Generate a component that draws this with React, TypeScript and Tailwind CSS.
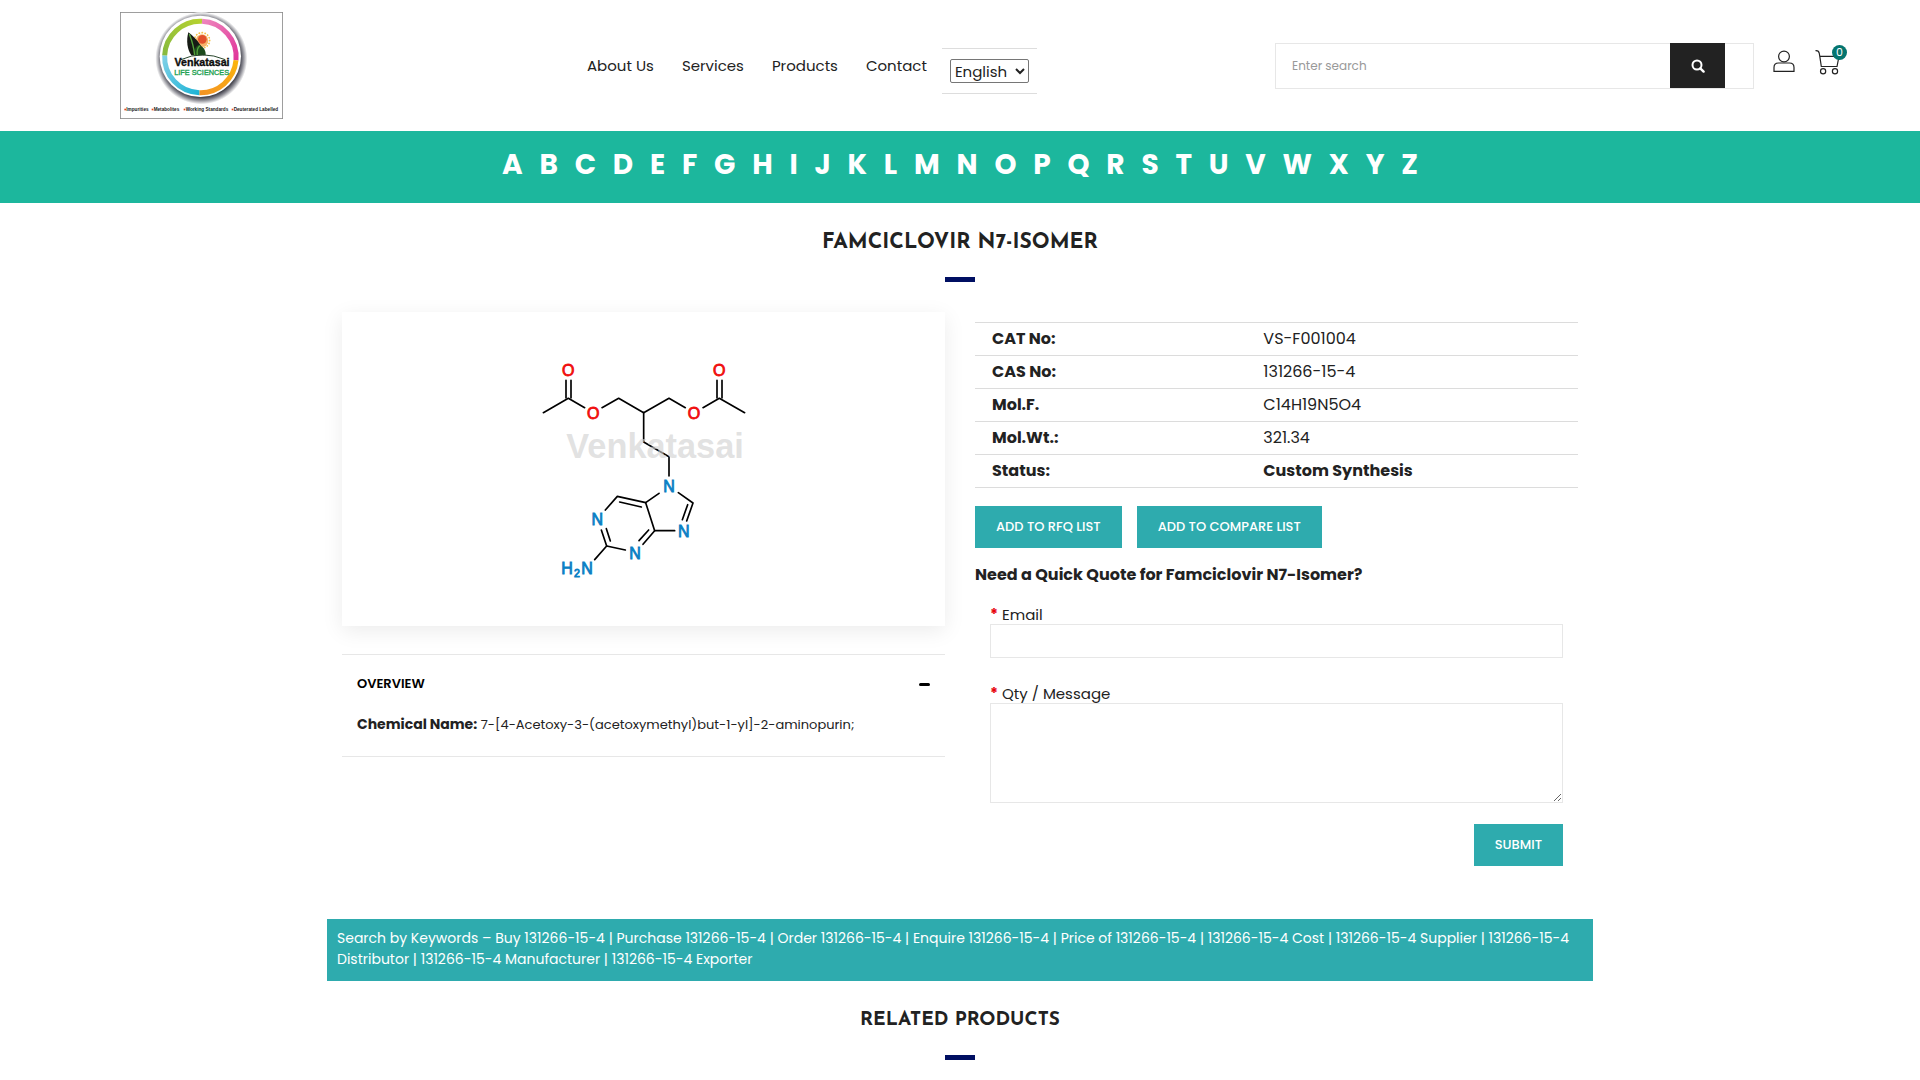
import React from "react";

const letters = "ABCDEFGHIJKLMNOPQRSTUVWXYZ".split("");
const navLinks = ["About Us", "Services", "Products", "Contact"];
const details = [
  { label: "CAT No:", value: "VS-F001004" },
  { label: "CAS No:", value: "131266-15-4" },
  { label: "Mol.F.", value: "C14H19N5O4" },
  { label: "Mol.Wt.:", value: "321.34" },
  { label: "Status:", value: "Custom Synthesis", strong: true },
];
const sans = "Liberation Sans, Arial, sans-serif";

function Logo() {
  return (
    <svg viewBox="0 0 489 321" className="h-[107px] w-[163px]" role="img" aria-label="Venkatasai Life Sciences">
      <defs>
        <radialGradient id="halo">
          <stop offset="0.84" stopColor="#3c3c46" />
          <stop offset="0.91" stopColor="#8a8a92" />
          <stop offset="1" stopColor="#ffffff" />
        </radialGradient>
        <linearGradient id="pink" x1="0" y1="0" x2="1" y2="1">
          <stop offset="0" stopColor="#ee86bd" />
          <stop offset="1" stopColor="#e0369a" />
        </linearGradient>
        <linearGradient id="orange" x1="1" y1="0" x2="0" y2="1">
          <stop offset="0" stopColor="#fbb40d" />
          <stop offset="1" stopColor="#f39324" />
        </linearGradient>
        <linearGradient id="blue" x1="0" y1="0" x2="1" y2="1">
          <stop offset="0" stopColor="#7fd0e6" />
          <stop offset="1" stopColor="#1fb4d6" />
        </linearGradient>
        <linearGradient id="green" x1="0" y1="1" x2="1" y2="0">
          <stop offset="0" stopColor="#86b93f" />
          <stop offset="1" stopColor="#b6d22f" />
        </linearGradient>
      </defs>
      <rect x="1" y="1" width="487" height="319" fill="#fff" stroke="#8b8b8b" strokeWidth="3" />
      <circle cx="244" cy="139" r="138" fill="url(#halo)" />
      <circle cx="241" cy="133" r="122" fill="#fff" />
      <g fill="none" strokeWidth="15">
        <path d="M246 28 A107 107 0 0 1 348 145" stroke="url(#pink)" />
        <path d="M348 145 A107 107 0 0 1 238 242" stroke="url(#orange)" />
        <path d="M238 242 A107 107 0 0 1 134 130" stroke="url(#blue)" />
        <path d="M134 130 A107 107 0 0 1 246 28" stroke="url(#green)" />
      </g>
      <circle cx="246" cy="85" r="23" fill="none" stroke="#f4c24a" strokeWidth="5" strokeLinecap="round" strokeDasharray="1 8" />
      <circle cx="246" cy="86" r="19" fill="#f7b56a" />
      <circle cx="247" cy="82" r="13" fill="#e2522c" />
      <path d="M205 61 C198 88 202 112 214 130 L252 130 C250 106 234 84 205 61Z" fill="#161a14" />
      <path d="M226 130 C220 114 226 104 236 98 C250 104 258 114 257 130 Z" fill="#1c4a1c" />
      <path d="M208 66 C218 92 222 107 224 130 M240 101 C231 108 230 118 232 130" stroke="#54a33b" strokeWidth="4" fill="none" />
      <path d="M183 143 Q246 114 316 143" fill="none" stroke="#28452b" strokeWidth="3" />
      <text x="246" y="162" textAnchor="middle" fontFamily={sans} fontWeight="700" fontSize="32" fill="#0c0c0c" stroke="#0c0c0c">Venkatasai</text>
      <text x="245" y="189" textAnchor="middle" fontFamily={sans} fontSize="22" fill="#1ca04f" stroke="#1ca04f">LIFE SCIENCES</text>
      <g fontFamily={sans} fontWeight="700" fontSize="14" fill="#191919">
        <text x="19" y="298">Impurities</text>
        <text x="101" y="298">Metabolites</text>
        <text x="197" y="298">Working Standards</text>
        <text x="341" y="298">Deuterated Labelled</text>
      </g>
      <g fill="#e5491f">
        <rect x="13" y="290" width="5" height="5" />
        <rect x="95" y="290" width="5" height="5" />
        <rect x="191" y="290" width="5" height="5" />
        <rect x="335" y="290" width="5" height="5" />
      </g>
    </svg>
  );
}

function Molecule() {
  return (
    <svg viewBox="-3 0 750 750" className="h-[250px] w-[250px]" role="img" aria-label="Structure of Famciclovir N7-Isomer">
      <g fill="none" stroke="#000" strokeWidth="5" strokeLinecap="round" strokeLinejoin="round">
        <path d="M70 218 L145 175 L194 203" />
        <path d="M138 174 V121 M153 174 V121" />
        <path d="M246 203 L296 175 L371 218 L447 175 L496 203" />
        <path d="M549 203 L598 175 L674 218" />
        <path d="M591 174 V121 M606 174 V121" />
        <path d="M371 218 V306 L447 350 V408" />
        <path d="M417 460 L377 488 L404 572 H464" />
        <path d="M475 458 L519 489 L500 543 M503 494 L487 539" />
        <path d="M377 488 L292 469 L256 510 M364 501 L299 486" />
        <path d="M404 572 L369 613 M386 570 L357 602" />
        <path d="M316 630 L260 618 L244 570 M271 603 L259 566" />
        <path d="M260 618 L224 659" />
      </g>
      <text x="139" y="353" fontFamily={sans} fontWeight="700" fontSize="103" fill="#d2d2d2" fillOpacity="0.65">Venkatasai</text>
      <g fontFamily={sans} fontSize="48" textAnchor="middle" strokeWidth="2.5">
        <g fill="#f00d0d" stroke="#f00d0d">
          <text x="145" y="107">O</text>
          <text x="598" y="107">O</text>
          <text x="220" y="238">O</text>
          <text x="522" y="238">O</text>
        </g>
        <g fill="#0a80c4" stroke="#0a80c4">
          <text x="447" y="457">N</text>
          <text x="232" y="554">N</text>
          <text x="491" y="591">N</text>
          <text x="345" y="656">N</text>
          <text x="141" y="703">H</text>
          <text x="171" y="711" fontSize="32">2</text>
          <text x="201" y="703">N</text>
        </g>
      </g>
    </svg>
  );
}

function SectionTitle({ children, small }: { children: React.ReactNode; small?: boolean }) {
  return (
    <div className="flex flex-col items-center font-['Josefin_Sans',Lato,sans-serif] text-[#222]">
      <h2 className={small ? "text-[19px] leading-7 font-bold uppercase" : "text-[21px] leading-7 font-bold uppercase"}>
        {children}
      </h2>
      <span className="mt-5 h-[5px] w-[30px] bg-[#000f62]" />
    </div>
  );
}

function Header() {
  return (
    <header className="grid grid-cols-[587fr_688fr_645fr]">
      <div className="py-3 pl-[120px]">
        <a href="#home" className="inline-block align-top">
          <Logo />
        </a>
      </div>
      <div className="flex items-start">
        <nav aria-label="Main" className="flex gap-7 pt-[54px] text-[15px] leading-6">
          {navLinks.map((item) => (
            <a key={item} href="#top" className="whitespace-nowrap">{item}</a>
          ))}
        </nav>
        <div className="mt-12 ml-[15px] border-y border-[#ddd] px-2 py-2.5">
          <select aria-label="Language" className="block h-6 w-[79px] rounded-xs border border-[#767676] bg-white text-[15px] leading-5">
            <option>English</option>
          </select>
        </div>
      </div>
      <div className="flex items-start pt-[43px]">
        <form className="flex h-[46px] w-[479px] border border-[#e7e7e7] pr-7" onSubmit={(e) => e.preventDefault()}>
          <input
            type="search"
            aria-label="Search"
            placeholder="Enter search"
            className="min-w-0 flex-1 px-4 text-xs outline-none placeholder:text-[#999]"
          />
          <button aria-label="Search" className="-mt-px flex w-[55px] items-center justify-center bg-[#222]">
            <svg viewBox="0 0 14 14" className="h-3.5 w-3.5" fill="none" stroke="#fff" strokeWidth="2">
              <circle cx="6" cy="6" r="4.5" />
              <path d="M9.3 9.3 L12.6 12.6" strokeWidth="2.4" strokeLinecap="round" />
            </svg>
          </button>
        </form>
        <a href="#account" aria-label="Account" className="mt-1.5 ml-[19px]">
          <svg viewBox="0 0 22 24" className="h-6 w-[22px]" fill="none" stroke="#222" strokeWidth="1.2">
            <circle cx="11" cy="7.5" r="5.4" />
            <path d="M1 22.4 V18.5 C1 15.5 3 14 5.5 14 H16.5 C19 14 21 15.5 21 18.5 V22.4 Z" />
          </svg>
        </a>
        <a href="#cart" aria-label="Cart, 0 items" className="relative mt-1.5 ml-5">
          <svg viewBox="0 0 26 26" className="h-[26px] w-[26px]" fill="none" stroke="#222" strokeWidth="1.2">
            <path d="M0.5 1.6 C3 1.4 4 2 4.3 4.5 L4.800 7.3 H24 L22 17.5 H6.3 L4.8 7.3" />
            <circle cx="8.1" cy="22.3" r="2.6" />
            <circle cx="20" cy="22.3" r="2.6" />
          </svg>
          <span className="absolute -top-1 left-[17px] flex h-[15px] w-[15px] items-center justify-center rounded-full bg-[#04756f] text-[11px] leading-none text-white">
            0
          </span>
        </a>
      </div>
    </header>
  );
}

const solidButton = "h-[42px] bg-[#2eabae] px-[21px] text-[13px] font-medium whitespace-nowrap text-white uppercase";

function QuoteForm() {
  return (
    <form className="flex flex-col px-[15px] pt-[19px]" onSubmit={(e) => e.preventDefault()}>
      <label htmlFor="email" className="text-[15px] leading-[18px]">
        <span className="font-bold text-red-600">*</span> Email
      </label>
      <input id="email" type="email" className="h-[34px] border border-[#e7e7e7] px-3 text-sm outline-none" />
      <label htmlFor="message" className="mt-[27px] text-[15px] leading-[18px]">
        <span className="font-bold text-red-600">*</span> Qty / Message
      </label>
      <textarea id="message" className="h-[100px] resize border border-[#e7e7e7] px-3 py-2 text-sm outline-none" />
      <button className={"mt-[21px] self-end " + solidButton}>Submit</button>
    </form>
  );
}

export default function App() {
  return (
    <div className="bg-white font-[Poppins,Inter,sans-serif] text-[#222]">
      <Header />
      <nav aria-label="Products by letter" className="flex h-[72px] justify-center bg-[#1cb79d] pt-3.5">
        <div className="flex w-[916px] justify-between text-[28px] leading-10 font-bold text-white">
          {letters.map((l) => (
            <a key={l} href="#letter">{l}</a>
          ))}
        </div>
      </nav>
      <main className="mx-auto max-w-[1266px]">
        <div className="pt-[26px]">
          <SectionTitle>Famciclovir N7-Isomer</SectionTitle>
        </div>
        <div className="grid grid-cols-2 gap-[30px] px-[15px] pt-[30px]">
          <div>
            <div className="flex h-[314px] items-start justify-center bg-white pt-7 shadow-[0_5px_20px_rgba(0,0,0,0.08)]">
              <Molecule />
            </div>
            <section className="mt-7 border-y border-[#e7e7e7] px-[15px] pt-[17px] pb-[19px]">
              <button className="flex w-full items-center justify-between text-[13px] leading-6 font-semibold text-black" aria-expanded="true">
                OVERVIEW
                <span className="h-[3px] w-[11px] rounded-xs bg-black" />
              </button>
              <p className="mt-4 text-[13px] leading-6">
                <strong className="text-sm leading-6 font-bold">Chemical Name:</strong>{" "}
                7-[4-Acetoxy-3-(acetoxymethyl)but-1-yl]-2-aminopurin;
              </p>
            </section>
          </div>
          <div className="pt-2.5">
            <table className="w-full border-collapse text-left text-base leading-6">
              <tbody>
                {details.map((d) => (
                  <tr key={d.label} className="h-[33px] border-y border-[#dcdcdc]">
                    <th scope="row" className="w-[45%] px-[17px] font-bold">{d.label}</th>
                    <td className={d.strong ? "px-[17px] font-bold" : "px-[17px]"}>{d.value}</td>
                  </tr>
                ))}
              </tbody>
            </table>
            <div className="mt-[18px] flex gap-[15px]">
              <button className={solidButton}>Add to RFQ List</button>
              <button className={solidButton}>Add to Compare List</button>
            </div>
            <h3 className="mt-[15px] text-base leading-6 font-bold">Need a Quick Quote for Famciclovir N7-Isomer?</h3>
            <QuoteForm />
          </div>
        </div>
        <p className="mt-[53px] bg-[#2eabae] px-2.5 pt-[9px] pb-[11px] text-sm leading-[21px] text-white">
          Search by Keywords – Buy 131266-15-4 | Purchase 131266-15-4 | Order 131266-15-4 | Enquire 131266-15-4 | Price of 131266-15-4 | 131266-15-4 Cost | 131266-15-4 Supplier | 131266-15-4 Distributor | 131266-15-4 Manufacturer | 131266-15-4 Exporter
        </p>
        <div className="pt-[26px] pb-5">
          <SectionTitle small>Related Products</SectionTitle>
        </div>
      </main>
    </div>
  );
}
